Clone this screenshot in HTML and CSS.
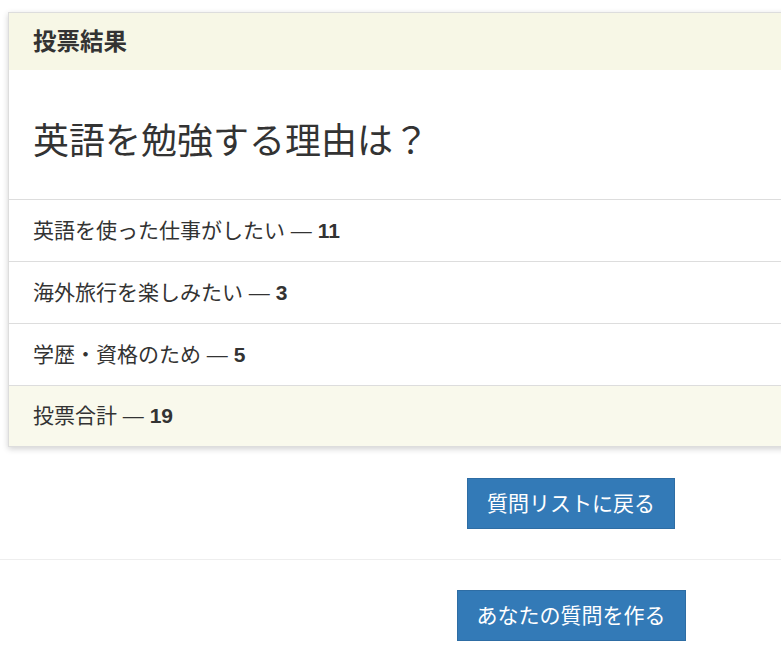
FILE: index.html
```html
<!DOCTYPE html>
<html lang="ja">
<head>
<meta charset="utf-8">
<title>投票結果</title>
<link rel="stylesheet" href="styles.css">
</head>
<body>
<div class="page">
  <div class="panel">
    <div class="panel-heading">投票結果</div>
    <div class="panel-body">
      <h1 class="question">英語を勉強する理由は？</h1>
    </div>
    <ul class="list">
      <li class="item">英語を使った仕事がしたい — <b>11</b></li>
      <li class="item">海外旅行を楽しみたい — <b>3</b></li>
      <li class="item">学歴・資格のため — <b>5</b></li>
      <li class="item total">投票合計 — <b>19</b></li>
    </ul>
  </div>
  <div class="actions">
    <a class="btn" href="#">質問リストに戻る</a>
  </div>
</div>
<hr class="divider">
<div class="page">
  <div class="actions second">
    <a class="btn" href="#">あなたの質問を作る</a>
  </div>
</div>
</body>
</html>
```

FILE: styles.css
```css
html, body {
  margin: 0;
  padding: 0;
  overflow: hidden;
  background: #fff;
}
body {
  font-family: "Liberation Sans", "Noto Sans CJK JP", sans-serif;
  color: #333;
}
.page {
  width: 1142px;
}
.panel {
  margin: 12px 0 0 8px;
  width: 1126px;
  border: 1px solid #dddddd;
  box-shadow: 0 2px 6px rgba(0,0,0,0.18);
  background: #fff;
}
.panel-heading {
  background: #f7f7e6;
  font-size: 23.5px;
  font-weight: 700;
  height: 57px;
  line-height: 58px;
  padding-left: 24px;
}
.panel-body {
  height: 129px;
  display: flex;
  align-items: center;
  padding-left: 24px;
  box-sizing: border-box;
  padding-top: 14px;
}
.question {
  margin: 0;
  font-size: 36px;
  font-weight: 400;
  line-height: 1;
}
.list {
  list-style: none;
  margin: 0;
  padding: 0;
}
.item {
  border-top: 1px solid #dddddd;
  height: 61px;
  line-height: 61px;
  padding-left: 24px;
  font-size: 21px;
}
.item b {
  font-weight: 700;
}
.item.total {
  background: #f9f9ec;
  height: 60px;
  line-height: 60px;
}
.actions {
  display: flex;
  justify-content: center;
  padding-top: 31px;
  padding-bottom: 30px;
}
.actions.second {
  padding-top: 30px;
}
.btn {
  display: inline-block;
  background: #337ab7;
  border: 1px solid #2e6da4;
  color: #fff;
  text-decoration: none;
  font-size: 21px;
  line-height: 29px;
  padding: 10px 19px;
}
.divider {
  margin: 0;
  border: 0;
  border-top: 1px solid #eeeeee;
  height: 0;
}
```
